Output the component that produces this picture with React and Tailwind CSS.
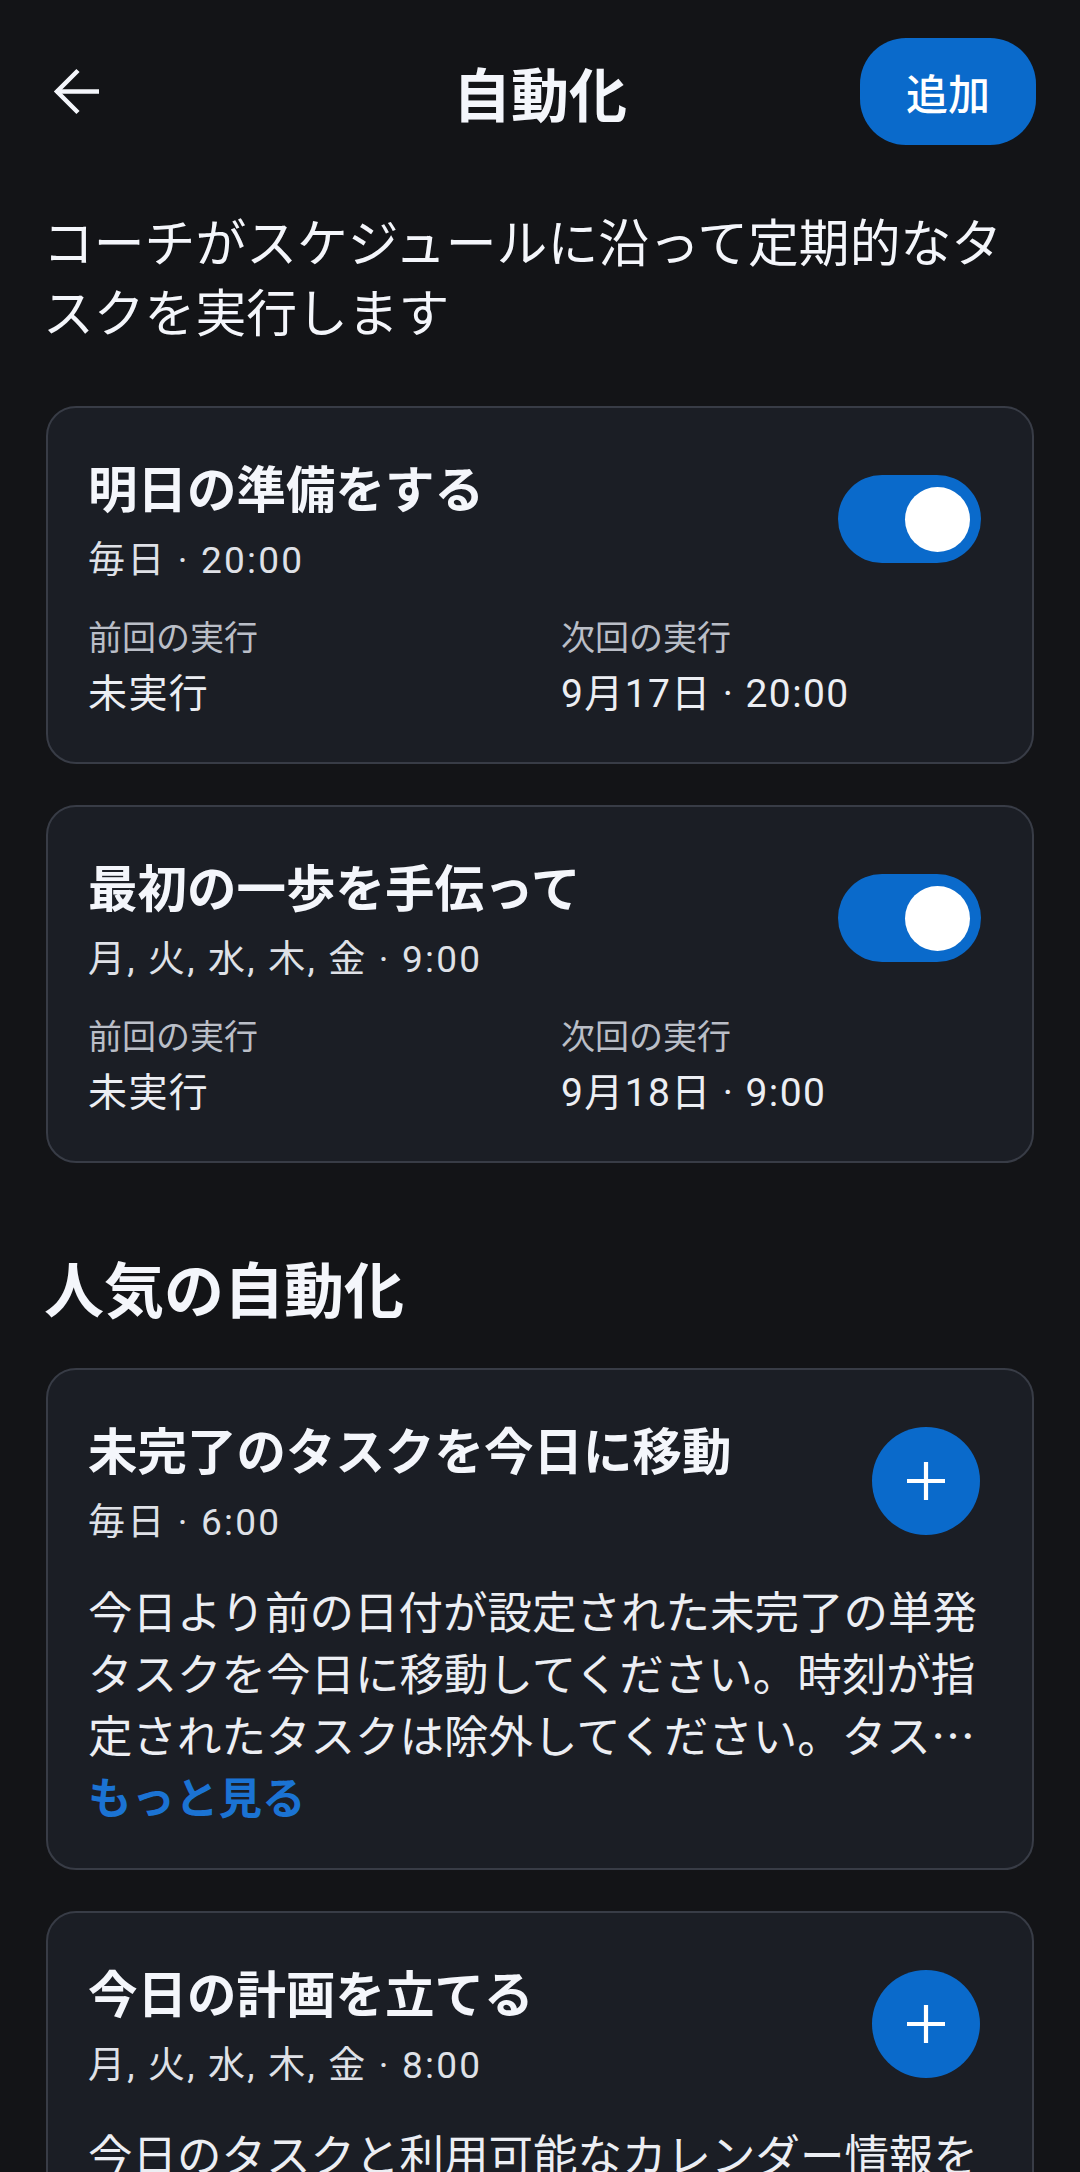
import React from "react";

const BLUE = "bg-[#0a6acb]";
const LATIN = "font-['Roboto','Noto_Sans_CJK_JP',sans-serif]";

function Toggle() {
  return (
    <div className="mr-[9px] mb-[4px] flex h-[88px] w-[143px] shrink-0 items-center justify-end rounded-full bg-[#0a6acb] pr-[11px]">
      <div className="h-[65px] w-[65px] rounded-full bg-white" />
    </div>
  );
}

function PlusButton() {
  return (
    <div className="mr-[10px] mb-[4px] flex h-[108px] w-[108px] shrink-0 items-center justify-center rounded-full bg-[#0a6acb]">
      <svg width="40" height="40" viewBox="0 0 40 40">
        <path d="M20 1v38M1 20h38" stroke="white" strokeWidth="4.2" fill="none" />
      </svg>
    </div>
  );
}

function CardHeader({ title, schedule, right }) {
  return (
    <div className="flex items-center justify-between">
      <div className="flex flex-col">
        <div className="text-[49.5px] font-bold leading-[60px] text-[#f4f6fb]">{title}</div>
        <div className={`mt-[20px] text-[37px] leading-[48px] tracking-[2.2px] text-[#dfe1e7] ${LATIN}`}>{schedule}</div>
      </div>
      {right}
    </div>
  );
}

function Card({ children }) {
  return (
    <div className="rounded-[30px] border-2 border-[#383c46] bg-[#1b1e25] pl-[40px] pr-[42px] pt-[49px]">
      {children}
    </div>
  );
}

function ScheduledCard({ title, schedule, last, next }) {
  return (
    <Card>
      <div className="pb-[44px]">
        <CardHeader title={title} schedule={schedule} right={<Toggle />} />
        <div className="mt-[29px] grid grid-cols-[473px_1fr]">
          <div className="flex flex-col">
            <div className="text-[34px] leading-[44px] text-[#babec7]">前回の実行</div>
            <div className={`mt-[12px] text-[39px] leading-[48px] tracking-[1.4px] text-[#eceef3] ${LATIN}`}>{last}</div>
          </div>
          <div className="flex flex-col">
            <div className="text-[34px] leading-[44px] text-[#babec7]">次回の実行</div>
            <div className={`mt-[12px] text-[39px] leading-[48px] tracking-[1.4px] text-[#eceef3] ${LATIN}`}>{next}</div>
          </div>
        </div>
      </div>
    </Card>
  );
}

function PopularCard({ title, schedule, desc }) {
  return (
    <Card>
      <div className="pb-[41px]">
        <CardHeader title={title} schedule={schedule} right={<PlusButton />} />
        <p className="mt-[32px] line-clamp-3 text-[44.5px] leading-[62px] text-[#eceef3]">{desc}</p>
        <div className="text-[43.5px] font-semibold leading-[62px] text-[#1b73d3]">もっと見る</div>
      </div>
    </Card>
  );
}

export default function App() {
  return (
    <div className="h-[2172px] w-full overflow-hidden bg-[#131417] font-['Noto_Sans_CJK_JP','Noto_Sans',sans-serif] text-[#f4f6fb]">
      <div className="grid h-[145px] grid-cols-[1fr_auto_1fr] items-center pl-[44px] pr-[44px] pt-[38px]">
        <div className="flex items-center">
          <svg width="63" height="63" viewBox="0 0 63 63">
            <path d="M12 31.5H55" stroke="#f4f6fb" strokeWidth="4.5" fill="none" />
            <path d="M34 10.5L13 31.5L34 52.5" stroke="#f4f6fb" strokeWidth="4.5" fill="none" />
          </svg>
        </div>
        <div className="text-[58px] font-bold leading-[70px]">自動化</div>
        <div className="flex justify-end">
          <div className={`flex h-[107px] w-[176px] items-center justify-center rounded-[46px] ${BLUE} text-[42px] font-medium text-white`}>
            追加
          </div>
        </div>
      </div>

      <div className="px-[46px]">
        <p className="ml-[-3px] mt-[60px] text-[50.8px] leading-[70px] text-[#f4f6fb]">
          コーチがスケジュールに沿って定期的なタスクを実行します
        </p>

        <div className="mt-[61px] flex flex-col gap-[41px]">
          <ScheduledCard title="明日の準備をする" schedule="毎日 · 20:00" last="未実行" next="9月17日 · 20:00" />
          <ScheduledCard
            title="最初の一歩を手伝って"
            schedule="月, 火, 水, 木, 金 · 9:00"
            last="未実行"
            next="9月18日 · 9:00"
          />
        </div>

        <h2 className="ml-[-2px] mt-[89px] text-[60px] font-bold leading-[70px]">人気の自動化</h2>

        <div className="mt-[46px] flex flex-col gap-[41px]">
          <PopularCard
            title="未完了のタスクを今日に移動"
            schedule="毎日 · 6:00"
            desc="今日より前の日付が設定された未完了の単発タスクを今日に移動してください。時刻が指定されたタスクは除外してください。タスクの順序はそのまま維持してください。"
          />
          <PopularCard
            title="今日の計画を立てる"
            schedule="月, 火, 水, 木, 金 · 8:00"
            desc="今日のタスクと利用可能なカレンダー情報を確認して、無理のない一日の計画を立ててください。優先度の高いタスクから順に時間を割り当ててください。"
          />
        </div>
      </div>
    </div>
  );
}
